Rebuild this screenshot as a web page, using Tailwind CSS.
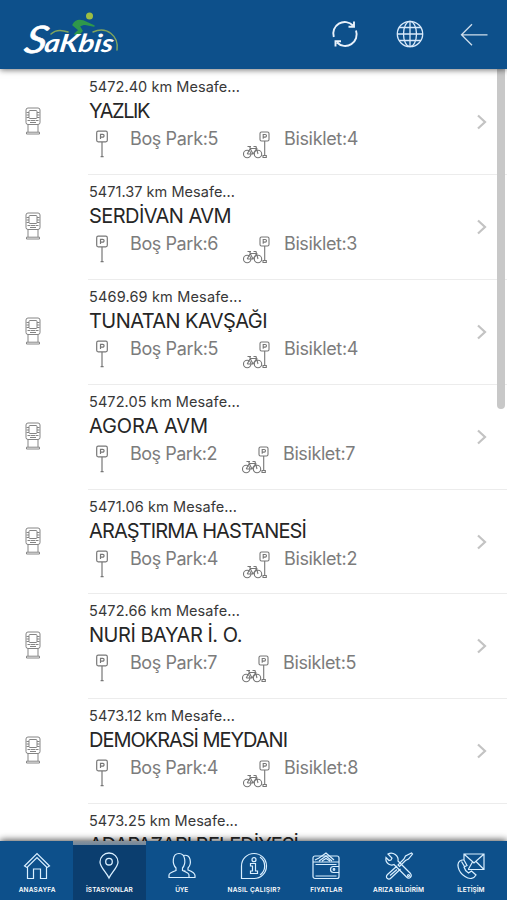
<!DOCTYPE html>
<html lang="tr">
<head>
<meta charset="utf-8">
<title>Sakbis</title>
<script src="https://cdn.jsdelivr.net/npm/@tailwindcss/browser@4"></script>
</head>
<body class="w-[507px] h-[900px] overflow-hidden bg-white font-['Inter','Open_Sans',sans-serif]">
<svg class="hidden">
  <symbol id="kiosk" viewBox="0 0 16 28"><g fill="none" stroke="#858585" stroke-width="1"><rect x="1" y="1" width="14" height="16.500" rx="2"/><rect x="4" y="3.500" width="8" height="8" rx="1"/><path d="M1.500 5.500h2.500M1.500 8h2.500M1.500 10.500h2.500M12 5.500h2.500M12 8h2.500M12 10.500h2.500M2.500 13.500h3M10.500 13.500h3M5 15.500h6M6 13.500h4M3 17.500V25M13 17.500V25M1.500 25.200h13v1.800h-13z"/></g></symbol>
  <symbol id="park" viewBox="0 0 12 28"><g fill="none" stroke="#777" stroke-width="1.200"><rect x=".7" y="1.200" width="10.600" height="10.600" rx="1.500"/><path d="M4.500 9V4.400h2.200a1.300 1.300 0 0 1 0 2.800H4.500M6 12v14.500M4.600 26.700h3"/></g></symbol>
  <symbol id="bike" viewBox="0 0 28 28"><g fill="none" stroke="#777" stroke-width="1.100"><rect x="17" y="1" width="9" height="9" rx="1.500"/><path d="M20.200 7.800V3.500h2a1.300 1.300 0 0 1 0 2.600h-2M21.700 10v14M20 26.500v-2h3.300v2z"/><circle cx="4.200" cy="23" r="3.700"/><circle cx="15" cy="23" r="3.700"/><path d="M4.200 23l3-5.500h6.500L10 23H4.200M7.200 17.500L10 23M6.500 15.500l1 2M4.500 15.500H8M15 23l-2-7.500h-2.500"/></g></symbol>
</svg>
<div class="relative flex flex-col h-full">
  <header class="relative z-10 h-[69px] shrink-0 bg-[#0d508b] shadow-[0_1px_6px_rgba(0,0,0,.55)] flex items-start justify-between pl-[20px] pr-[19px]">
    <svg class="mt-[8px]" width="102" height="50" viewBox="20 8 102 50" fill="none" stroke-linecap="round" stroke-linejoin="round">
      <path d="M51 34Q57 28 68 32M93 32C107 26 119 36 117 50" stroke="#80a45d" stroke-width="1.500"/>
      <path d="M75 34L79 30L73 25Q76 19 83 21L94 26L84 24L79 26L82 31L77 36Z" fill="#2f984b" stroke="#2f984b" stroke-width="1.500"/>
      <circle cx="89.500" cy="16" r="3.500" fill="#9dbd43"/>
      <g fill="#fff" font-family="Lato, sans-serif" font-style="italic" font-weight="700">
        <text transform="translate(23 53) skewX(-12)" font-size="38" font-weight="400" stroke="#fff" stroke-width=".6" textLength="22" lengthAdjust="spacingAndGlyphs">S</text>
        <text transform="translate(43.500 51.500) skewX(-9)" font-size="25" textLength="69" lengthAdjust="spacingAndGlyphs">aKbis</text>
      </g>
    </svg>
    <div class="flex items-center h-[68px] gap-[36.500px]">
      <svg width="28" height="28" viewBox="0 0 28 28" fill="none" stroke="#e9f2fb" stroke-width="1.900"><path d="M2.800 17A11.500 11.500 0 0 1 22 5.500M25 10.500A11.500 11.500 0 0 1 6 22.500M23 1.500v5.300h-5.500M4.500 26.500v-5.300H10"/></svg>
      <svg width="28" height="28" viewBox="0 0 28 28" fill="none" stroke="#d9eafb" stroke-width="1.300"><circle cx="14" cy="14" r="12.700"/><ellipse cx="14" cy="14" rx="6.500" ry="12.700"/><path d="M14 1v26M1 14h26M3 7.500h22M3 20.500h22"/></svg>
      <svg width="28" height="28" viewBox="0 0 28 28" fill="none" stroke="#cfdeec" stroke-width="1.300"><path d="M27.500 14.800H1.500M12 4.300L1.500 14.800L12 25.300"/></svg>
    </div>
  </header>
  <main id="list" class="h-[772px] shrink-0 overflow-hidden bg-white pt-px"></main>
  <div class="absolute right-[2px] top-[69px] w-[8px] h-[340px] bg-[#c8c8c8] rounded-b-full"></div>
  <nav class="relative z-10 h-[59px] shrink-0 bg-[#0d508b] shadow-[0_-1px_7px_rgba(0,0,0,.7)] grid grid-cols-7 pl-[1px] text-white text-[6.500px] leading-[11px] font-semibold">
    <div class="flex flex-col items-center pt-[10px]"><svg width="30" height="30" viewBox="0 0 30 30" fill="none" stroke="#d9efff" stroke-width="1.200"><path d="M2.500 15L15 2.500L27.500 15L25 16.500L15 6.500L5 16.500ZM5.500 16v11.500h6V18h7v9.500h6V16"/></svg><span class="mt-[4px] whitespace-nowrap" data-font="600 6.5px" data-w="37">ANASAYFA</span></div>
    <div class="relative flex flex-col items-center pt-[10px] bg-[#0b3e6f]"><div class="absolute inset-x-0 top-0 h-[4px] bg-linear-to-b from-[#8a929a] to-[#71879c]"></div><svg width="30" height="30" viewBox="0 0 30 30" fill="none" stroke="#d9efff" stroke-width="1.300"><path d="M15 27C12 21 6 16 6 11a9 9 0 0 1 18 0C24 16 18 21 15 27Z"/><circle cx="15" cy="10.700" r="3.300"/></svg><span class="mt-[4px] whitespace-nowrap" data-font="600 6.5px" data-w="47">İSTASYONLAR</span></div>
    <div class="flex flex-col items-center pt-[10px]"><svg width="30" height="30" viewBox="0 0 30 30" fill="none" stroke="#d9efff" stroke-width="1.200"><path d="M2 26.500V24Q2 22 9 19.500V17C5 13 5 2.500 12 2.500S19 13 15.500 17v2.500Q22 22 22 24v2.500ZM16.500 4.500C24 2.500 25 13 21 17v2Q28 21.500 28 24.500v2h-6M15.500 19.500l3 .5"/></svg><span class="mt-[4px] whitespace-nowrap" data-font="600 6.5px" data-w="13">ÜYE</span></div>
    <div class="flex flex-col items-center pt-[10px]"><svg width="30" height="30" viewBox="0 0 30 30" fill="none" stroke="#d9efff" stroke-width="1.200"><path d="M2.500 27.500V15A12.500 12.500 0 1 1 15 27.500ZM21 6a11 11 0 0 1 0 18"/><circle cx="15" cy="8.700" r="2"/><path d="M11.500 12.500h5V20h2v2.500h-7V20h2v-5h-2z"/></svg><span class="mt-[4px] whitespace-nowrap" data-font="600 6.5px" data-w="53">NASIL ÇALIŞIR?</span></div>
    <div class="flex flex-col items-center pt-[10px]"><svg width="30" height="30" viewBox="0 0 30 30" fill="none" stroke="#d9efff" stroke-width="1.200"><rect x="2" y="5" width="26" height="22.500" rx="2"/><path d="M2 11h26M4 9l4-2L15 2l8 7M8 10l7-5 6 5M11 10l4-2.500 4 2.500M4.500 13.500h21M4.500 25h21M28 15.500h-5.500a3 3 0 0 0 0 6H28"/><circle cx="23" cy="18.500" r=".8"/></svg><span class="mt-[4px] whitespace-nowrap" data-font="600 6.5px" data-w="32">FIYATLAR</span></div>
    <div class="flex flex-col items-center pt-[10px]"><svg width="30" height="30" viewBox="0 0 30 30" fill="none" stroke="#d9efff" stroke-width="1.200"><path d="M4 3l4 4-1 2-2 .5-3-3C1 13 7 15 10 13.500L22.500 26c3 3 6-1 4-3.500L14 10C15 5 9 0 4 3ZM27.500 2l1 1-4 5-3 1.500-6 6-1.500-1.500 6-6L21.500 5ZM13 15L3.500 23.500c-3 3 1 6 3.500 3.500L16.500 18M13 18.500l-7 6"/><circle cx="24.500" cy="24.500" r="1"/></svg><span class="mt-[4px] whitespace-nowrap" data-font="600 6.5px" data-w="51">ARIZA BİLDİRİM</span></div>
    <div class="flex flex-col items-center pt-[10px]"><svg width="30" height="30" viewBox="0 0 30 30" fill="none" stroke="#d9efff" stroke-width="1.200"><path d="M8 9V3h20v15.500H12M8.500 3.500L18 12L27.500 3.500M12.500 18l4-7M27.500 18L20 10.500M6 9C-1 11 2 21 9 25.500c5 3.500 9 2 11-1.500l-4.500-4-3 2Q9 20 8 16l3-1.500L8 9ZM5.500 10.500l3 5"/></svg><span class="mt-[4px] whitespace-nowrap" data-font="600 6.5px" data-w="27">İLETİŞİM</span></div>
  </nav>
</div>
<script>
const stations = [
  ['5472.40', 151, 'YAZLIK', 60, 5, 88, 4, 74],
  ['5471.37', 146, 'SERDİVAN AVM', 142, 6, 88, 3, 73],
  ['5469.69', 153, 'TUNATAN KAVŞAĞI', 178, 5, 88, 4, 74],
  ['5472.05', 151, 'AGORA AVM', 119, 2, 87, 7, 72],
  ['5471.06', 148, 'ARAŞTIRMA HASTANESİ', 217, 4, 88, 2, 73],
  ['5472.66', 151, 'NURİ BAYAR İ. O.', 153, 7, 87, 5, 73],
  ['5473.12', 146, 'DEMOKRASİ MEYDANI', 198, 4, 88, 8, 74],
  ['5473.25', 149, 'ADAPAZARI BELEDİYESİ', 209, 5, 88, 4, 74]
];
document.getElementById('list').innerHTML = stations.map(([km, kw, name, nw, free, fw, bikes, bw]) => `
  <div class="flex h-[104.9px]">
    <div class="w-[88px] shrink-0 pt-[37px] pl-[25px]"><svg class="w-[16px] h-[28px]"><use href="#kiosk"/></svg></div>
    <div class="relative flex-1 border-b border-[#ececec] pl-[1px] pt-[7px]">
      <div class="h-[20px] leading-[20px] text-[14.500px] text-[#383838] whitespace-nowrap"><span data-font="400 14.5px" data-w="${kw}">${km} km Mesafe...</span></div>
      <div class="h-[28px] leading-[29px] text-[20px] text-[#262626] whitespace-nowrap"><span data-font="400 20px" data-w="${nw}">${name}</span></div>
      <div class="flex h-[30px] pl-[7px] text-[18px] leading-[28px] text-[#7c7c7c] whitespace-nowrap">
        <svg class="w-[12px] h-[28px] mt-[5px]"><use href="#park"/></svg>
        <span class="ml-[22px]" data-font="400 18px" data-w="${fw}">Boş Park:${free}</span>
        <svg class="w-[28px] h-[28px] ml-[25px] mt-[6px]"><use href="#bike"/></svg>
        <span class="ml-[13px]" data-font="400 18px" data-w="${bw}">Bisiklet:${bikes}</span>
      </div>
      <svg class="absolute right-[19px] top-[44px]" width="12" height="16" viewBox="0 0 12 16" fill="none" stroke="#c3c3c3" stroke-width="2.200"><path d="M2 1.500L9 8L2 14.500"/></svg>
    </div>
  </div>`).join('');
const ctx = document.createElement('canvas').getContext('2d');
document.querySelectorAll('[data-w]').forEach(el => {
  ctx.font = el.dataset.font + ' Inter, "Open Sans", sans-serif';
  const gap = (el.dataset.w - ctx.measureText(el.textContent).width) / el.textContent.length;
  el.style.letterSpacing = gap + 'px';
});
</script>
</body>
</html>
